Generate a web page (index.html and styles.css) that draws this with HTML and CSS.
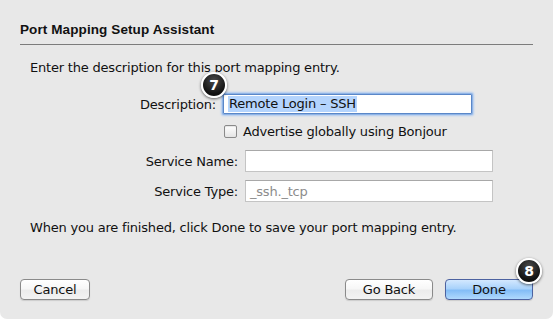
FILE: index.html
```html
<!DOCTYPE html>
<html lang="en">
<head>
  <meta charset="UTF-8">
  <title>Port Mapping Setup Assistant</title>
  <link rel="stylesheet" href="styles.css">
</head>
<body>
  <div class="window">
    <header class="title-bar">
      <h1>Port Mapping Setup Assistant</h1>
    </header>
    <hr class="rule">

    <p class="intro">Enter the description for this port mapping entry.</p>

    <!-- Form rows -->
    <div class="form">
      <div class="row row-desc">
        <label class="label">Description:</label>
        <div class="field focused"><span class="selected">Remote Login – SSH</span></div>
      </div>
      <div class="row row-check">
        <span class="checkbox"></span>
        <span class="check-label">Advertise globally using Bonjour</span>
      </div>
      <div class="row row-service">
        <label class="label">Service Name:</label>
        <div class="field"></div>
      </div>
      <div class="row row-service">
        <label class="label">Service Type:</label>
        <div class="field"><span class="placeholder">_ssh._tcp</span></div>
      </div>
    </div>

    <p class="outro">When you are finished, click Done to save your port mapping entry.</p>

    <footer class="buttons">
      <button class="btn btn-cancel">Cancel</button>
      <div class="right-buttons">
        <button class="btn btn-back">Go Back</button>
        <button class="btn btn-done">Done</button>
      </div>
    </footer>

    <!-- Step badges -->
    <span class="badge badge-7">7</span>
    <span class="badge badge-8">8</span>
  </div>
</body>
</html>
```

FILE: styles.css
```css
html, body {
  margin: 0;
  padding: 0;
  background: #ffffff;
}
body {
  font-family: "DejaVu Sans", "Liberation Sans", sans-serif;
  font-size: 13px;
  letter-spacing: -0.2px;
  color: #111;
}
.window {
  position: relative;
  width: 553px;
  height: 319px;
  box-sizing: border-box;
  background: #e8e8e8;
  border-radius: 0 0 7px 7px;
  display: flex;
  flex-direction: column;
  overflow: hidden;
}
.title-bar {
  padding: 22px 20px 0;
}
h1 {
  margin: 0;
  font-family: "Liberation Sans", Arial, sans-serif;
  font-size: 13.5px;
  line-height: 15px;
  letter-spacing: 0.1px;
  font-weight: bold;
  color: #111;
}
.rule {
  margin: 7px 20px 0;
  border: none;
  border-top: 1px solid #7c7c7c;
  height: 0;
}
.intro {
  margin: 15px 0 0 30px;
  line-height: 15px;
}

/* form */
.form {
  display: flex;
  flex-direction: column;
  margin-top: 19px;
}
.row {
  display: flex;
  align-items: center;
}
.label {
  text-align: right;
  line-height: 15px;
}
.row-desc .label {
  width: 186px;
  padding-left: 30px;
}
.row-desc .field {
  margin-left: 7px;
  width: 249px;
  height: 20px;
  border: 1px solid #5a87c8;
  box-shadow: 0 0 0 1px #8fb4e6, 0 0 2px 2px #b0cbf0;
  border-radius: 1px;
}
.field {
  box-sizing: border-box;
  background: #ffffff;
  border: 1px solid #c4c4c4;
  border-top-color: #a8a8a8;
  display: flex;
  align-items: center;
  padding-left: 4px;
}
.selected {
  background: #b4d4fd;
  line-height: 16px;
  padding: 0 1px;
}
.row-check {
  margin-top: 10px;
  padding-left: 224px;
}
.checkbox {
  box-sizing: border-box;
  width: 13px;
  height: 13px;
  border: 1px solid #8a8a8a;
  border-radius: 2px;
  background: linear-gradient(#ffffff, #e4e4e4);
  box-shadow: inset 0 1px 1px rgba(0, 0, 0, 0.1);
}
.check-label {
  margin-left: 6px;
  line-height: 15px;
}
.row-service {
  margin-top: 8px;
}
.row-check + .row-service {
  margin-top: 11px;
}
.row-service .label {
  width: 208px;
  padding-left: 30px;
}
.row-service .field {
  margin-left: 7px;
  width: 248px;
  height: 22px;
}
.placeholder {
  color: #8c8c8c;
}
.outro {
  margin: 18px 0 0 30px;
  line-height: 15px;
}

/* buttons */
.buttons {
  margin-top: auto;
  margin-bottom: 19px;
  padding: 0 20px;
  display: flex;
  justify-content: space-between;
}
.right-buttons {
  display: flex;
  gap: 12px;
}
.btn {
  font-family: inherit;
  font-size: 13px;
  letter-spacing: -0.2px;
  height: 21px;
  padding: 0;
  border: 1px solid #8a8a8a;
  border-radius: 4px;
  color: #111;
  background: linear-gradient(#ffffff 0%, #f7f7f7 45%, #ececec 55%, #f3f3f3 100%);
  box-shadow: 0 1px 1px rgba(0, 0, 0, 0.12);
  cursor: pointer;
}
.btn-cancel {
  width: 70px;
}
.btn-back {
  width: 88px;
}
.btn-done {
  width: 88px;
  border-color: #4d62a0;
  background: linear-gradient(#d3e8fe 0%, #a9d2fb 45%, #84bdf6 55%, #b0d9fd 100%);
}

/* step badges */
.badge {
  position: absolute;
  width: 22px;
  height: 22px;
  border-radius: 50%;
  border: 2px solid #ffffff;
  background: radial-gradient(circle at 50% 30%, #4a4a4a, #111111 70%);
  box-shadow: 0 1px 3px rgba(0, 0, 0, 0.6);
  color: #ffffff;
  font-weight: bold;
  font-size: 14px;
  letter-spacing: 0;
  line-height: 22px;
  text-align: center;
}
.badge-7 {
  left: 201px;
  top: 72px;
}
.badge-8 {
  left: 516px;
  top: 258px;
}
```
